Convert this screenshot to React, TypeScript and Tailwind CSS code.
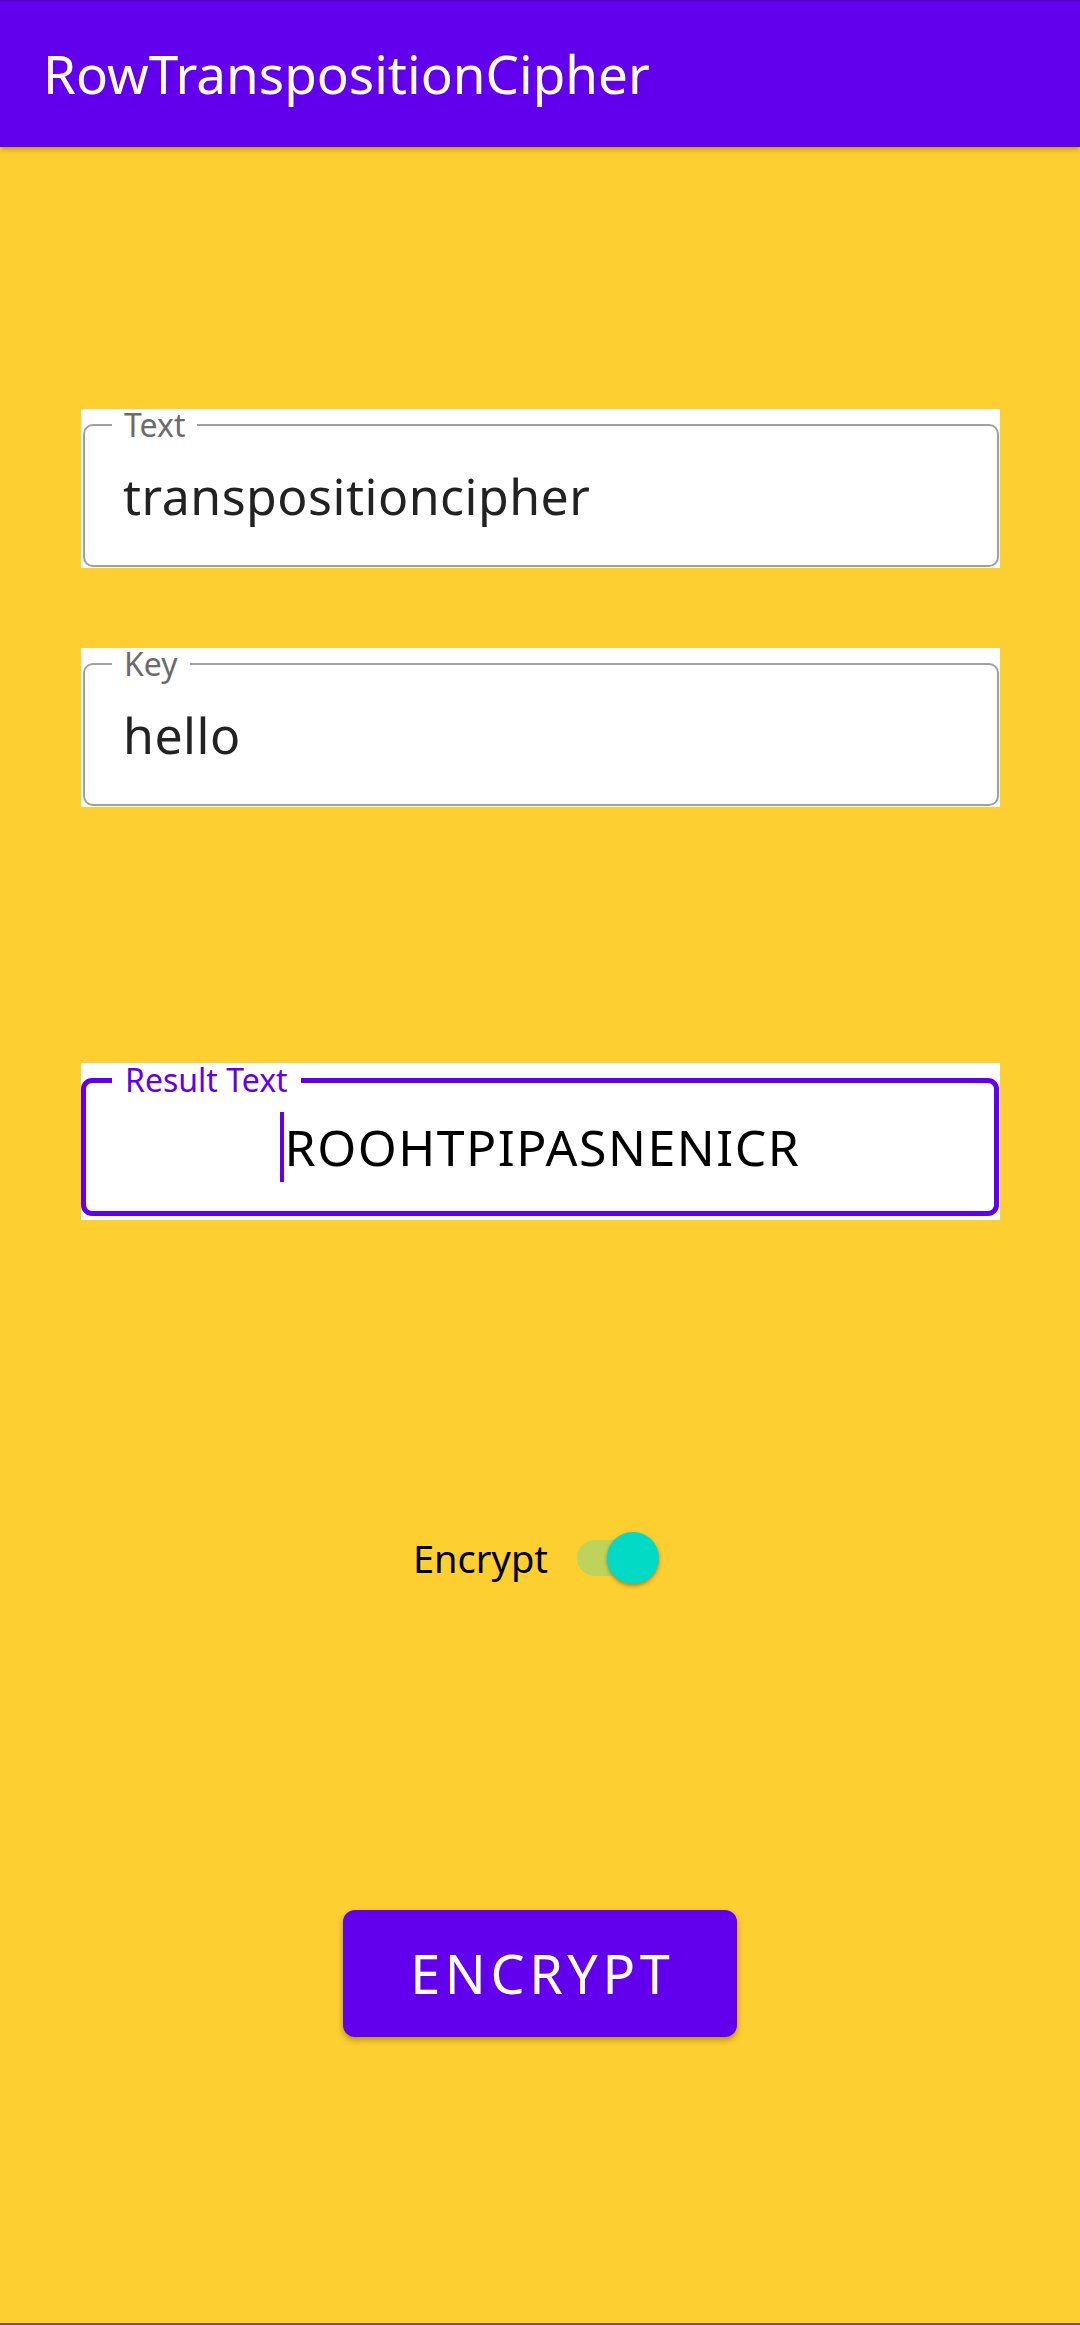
import { useState } from 'react';

const font = { fontFamily: '"Noto Sans", "Open Sans", sans-serif' };

const App = () => {
  const [text] = useState('transpositioncipher');
  const [key] = useState('hello');
  const [encrypt, setEncrypt] = useState(true);

  return (
    <div
      style={font}
      className="h-[2325px] bg-[#fecf31] flex flex-col border-b-2 border-[#6f5c14]"
    >
      <div className="h-[147px] shrink-0 bg-[#6200ee] border-t border-[#4a00b4] shadow-[0_2px_5px_rgba(0,0,0,0.3)] flex items-center pl-[43px]">
        <span className="text-white text-[53px] leading-[72px]">RowTranspositionCipher</span>
      </div>

      <div className="mt-[262px] ml-[81px] w-[919px] h-[159px] bg-white pl-[2px] pr-[1px]">
        <fieldset className="h-[158px] border-[2.5px] border-[#a0a0a0] rounded-[10px]">
          <legend className="ml-[27px] px-[12px] text-[32px] leading-[32px] text-[#6b6b6b]">Text</legend>
          <div className="h-[124px] pb-[14px] flex items-center pl-[38px] text-[50px] leading-[67px] tracking-[0.5px] text-[#222]">
            {text}
          </div>
        </fieldset>
      </div>

      <div className="mt-[80px] ml-[81px] w-[919px] h-[159px] bg-white pl-[2px] pr-[1px]">
        <fieldset className="h-[158px] border-[2.5px] border-[#a0a0a0] rounded-[10px]">
          <legend className="ml-[27px] px-[12px] text-[32px] leading-[32px] text-[#6b6b6b]">Key</legend>
          <div className="h-[124px] pb-[14px] flex items-center pl-[38px] text-[50px] leading-[67px] tracking-[0.5px] text-[#222]">
            {key}
          </div>
        </fieldset>
      </div>

      <div className="mt-[256px] ml-[81px] w-[919px] h-[157px] bg-white pt-[1px] pr-[1px]">
        <fieldset className="h-[152px] border-[5px] border-[#6200ee] rounded-[11px]">
          <legend className="ml-[26px] px-[13px] text-[32px] leading-[32px] text-[#6200ee]">Result Text</legend>
          <div className="h-[115px] pb-[13px] flex items-center justify-center text-[50px] leading-[67px] tracking-[1.5px] text-black">
            <span className="w-[4px] h-[70px] bg-[#6200ee] mr-[1px]" />
            <span>ROOHTPIPASNENICR</span>
          </div>
        </fieldset>
      </div>

      <div className="mt-[312px] h-[52px] flex items-center justify-center gap-[29px] pr-[8px]">
        <span className="text-[38px] text-black">Encrypt</span>
        <button
          onClick={() => setEncrypt(!encrypt)}
          className="relative w-[82px] h-[52px] flex items-center"
        >
          <span className="w-[70px] h-[36px] rounded-full bg-[#bfd35a]" />
          <span className="absolute right-0 top-0 size-[52px] rounded-full bg-[#03dac5] shadow-[0_2px_4px_rgba(0,0,0,0.35)]" />
        </button>
      </div>

      <div className="mt-[326px] flex justify-center">
        <button className="w-[394px] h-[127px] bg-[#6200ee] rounded-[12px] shadow-[0_3px_6px_rgba(0,0,0,0.3)] flex items-center justify-center text-white text-[54px] tracking-[0.085em] pl-[0.085em]">
          {encrypt ? 'ENCRYPT' : 'DECRYPT'}
        </button>
      </div>
    </div>
  );
};

export default App;
